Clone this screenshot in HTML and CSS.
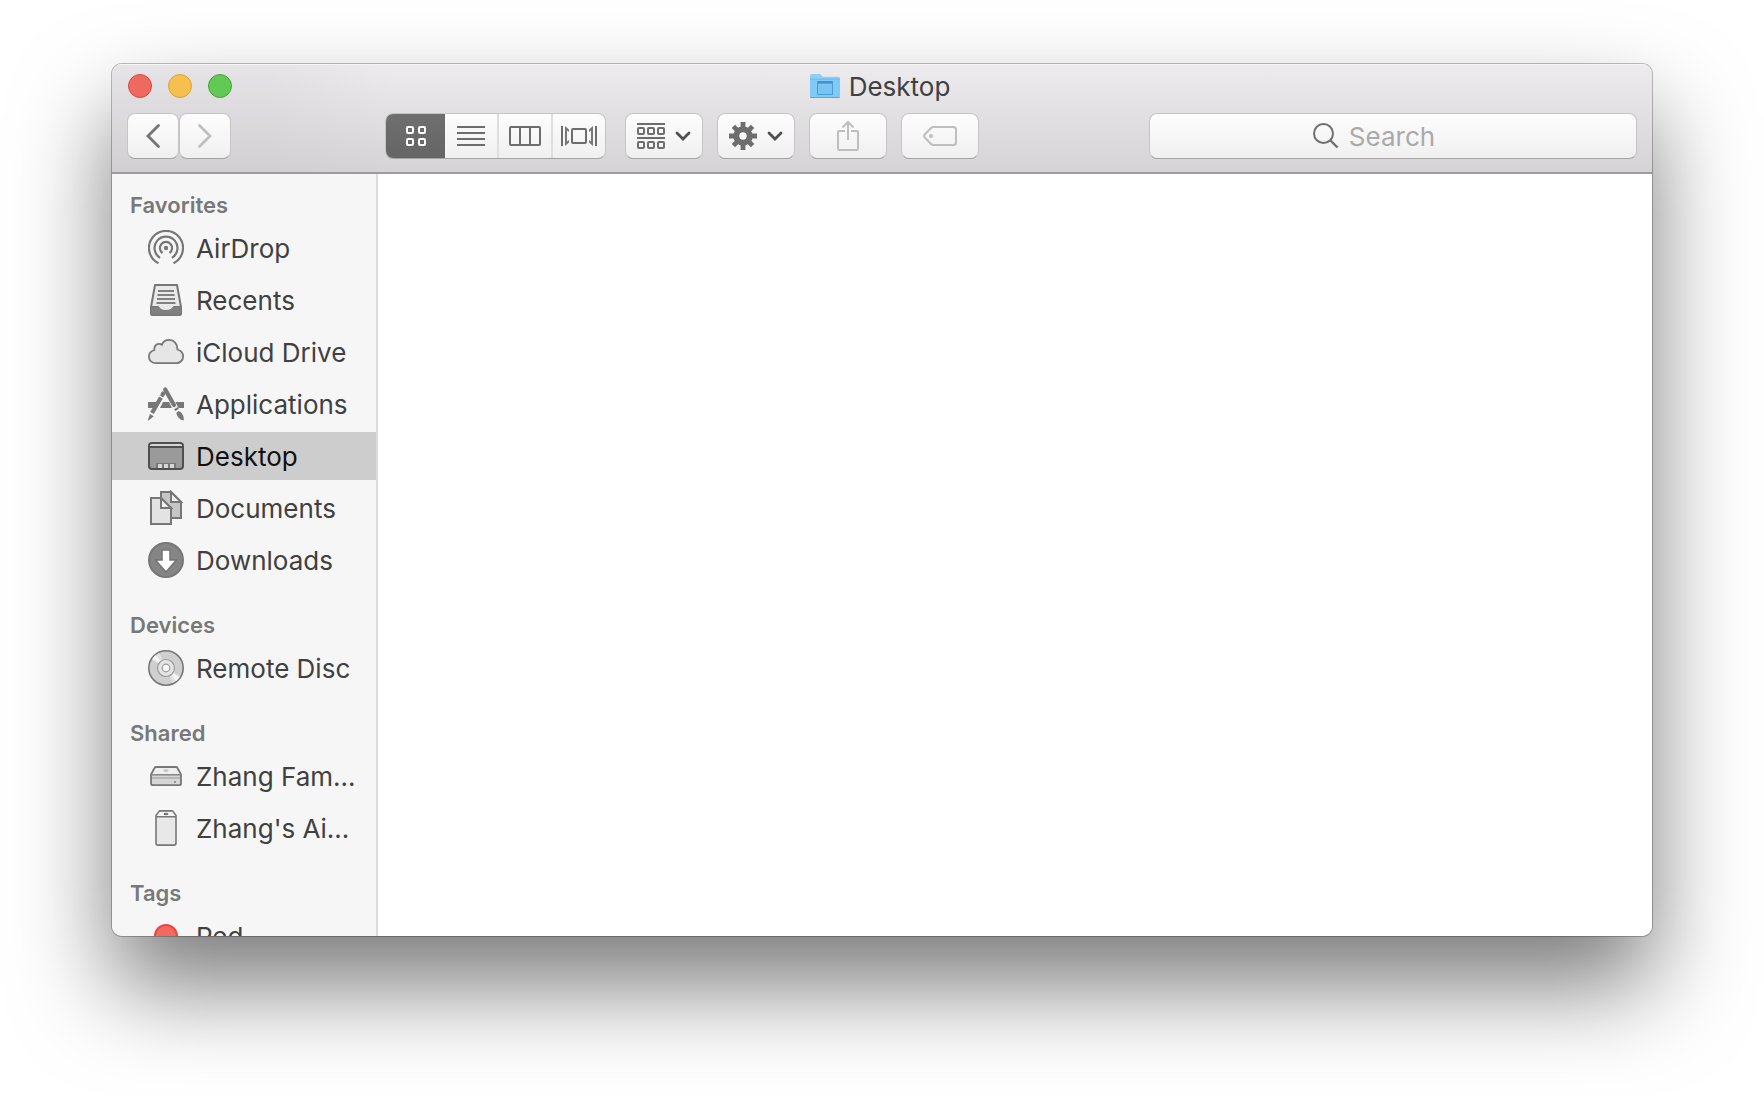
FILE: index.html
```html
<!DOCTYPE html>
<html lang="en">
<head>
    <meta charset="UTF-8">
    <meta name="viewport" content="width=device-width, initial-scale=1.0">
    <title>Desktop</title>
    <link rel="stylesheet" href="styles.css">
</head>
<body>
    <div class="window">
        <header class="toolbar">
            <div class="titlebar">
                <div class="window-controls">
                    <button type="button" class="light close" aria-label="Close"></button>
                    <button type="button" class="light minimize" aria-label="Minimize"></button>
                    <button type="button" class="light zoom" aria-label="Zoom"></button>
                </div>
                <h1 class="title">
                    <svg width="30" height="26" viewBox="0 0 30 26" aria-hidden="true">
                        <path d="M0 2.5Q0 1 1.500 1H9.500Q10.500 1 11.200 2L12.500 3.800H28.500Q30 3.800 30 5.300V23.500Q30 25 28.500 25H1.500Q0 25 0 23.500Z" fill="#8fd0f6"/>
                        <path d="M0 6H30V23.500Q30 25 28.500 25H1.500Q0 25 0 23.500Z" fill="#7fcaf6"/>
                        <path d="M0 6H30" stroke="#6bb8e8"/>
                        <path d="M0.500 24.500H29.500" stroke="#5ba4cf"/>
                        <rect x="7.500" y="8.500" width="15" height="13" fill="#79c4f1" stroke="#459ed6"/>
                        <path d="M8 9.500H22" stroke="#3b8fc8" stroke-width="2"/>
                    </svg>
                    Desktop
                </h1>
            </div>

            <div class="tools">
                <div class="nav-buttons">
                    <button type="button" class="btn btn-nav" aria-label="Back">
                        <svg width="16" height="26" viewBox="0 0 16 26"><path d="M13.500 2.500L3 13L13.500 23.500" fill="none" stroke="#737373" stroke-width="2.800" stroke-linecap="round"/></svg>
                    </button>
                    <button type="button" class="btn btn-nav" aria-label="Forward" disabled>
                        <svg width="16" height="26" viewBox="0 0 16 26"><path d="M2.500 2.500L13 13L2.500 23.500" fill="none" stroke="#c0c0c0" stroke-width="2.800" stroke-linecap="round"/></svg>
                    </button>
                </div>

                <div class="view-switch">
                    <button type="button" class="view active" aria-label="Icon view">
                        <svg width="20" height="20" viewBox="0 0 20 20" fill="none" stroke="#fff" stroke-width="2">
                            <rect x="1" y="1" width="6" height="6" rx="1"/>
                            <rect x="13" y="1" width="6" height="6" rx="1"/>
                            <rect x="1" y="13" width="6" height="6" rx="1"/>
                            <rect x="13" y="13" width="6" height="6" rx="1"/>
                        </svg>
                    </button>
                    <button type="button" class="view" aria-label="List view">
                        <svg width="28" height="20" viewBox="0 0 28 20"><path d="M0 1H28M0 7H28M0 13H28M0 19H28" stroke="#6d6d6d" stroke-width="2"/></svg>
                    </button>
                    <button type="button" class="view" aria-label="Column view">
                        <svg width="32" height="20" viewBox="0 0 32 20" fill="none" stroke="#6d6d6d" stroke-width="2">
                            <rect x="1" y="1" width="30" height="18" rx="1"/>
                            <path d="M11 1V19M21 1V19"/>
                        </svg>
                    </button>
                    <button type="button" class="view" aria-label="Gallery view">
                        <svg width="36" height="20" viewBox="0 0 36 20">
                            <g fill="none" stroke="#6d6d6d" stroke-width="2">
                                <path d="M1 0V20M35 0V20"/>
                                <rect x="11" y="3" width="14" height="14" rx="1"/>
                            </g>
                            <path d="M4 0L8 3.500V6L6 4.500V15.500L8 14V16.500L4 20ZM32 0L28 3.500V6L30 4.500V15.500L28 14V16.500L32 20Z" fill="#777"/>
                        </svg>
                    </button>
                </div>

                <div class="actions">
                    <button type="button" class="btn btn-tool" aria-label="Arrange">
                        <svg width="28" height="26" viewBox="0 0 28 26" fill="none" stroke="#6d6d6d" stroke-width="2">
                            <path d="M0 1H28M0 15H28"/>
                            <rect x="1" y="5" width="6" height="6" rx="1"/>
                            <rect x="11" y="5" width="6" height="6" rx="1"/>
                            <rect x="21" y="5" width="6" height="6" rx="1"/>
                            <rect x="1" y="19" width="6" height="6" rx="1"/>
                            <rect x="11" y="19" width="6" height="6" rx="1"/>
                            <rect x="21" y="19" width="6" height="6" rx="1"/>
                        </svg>
                        <svg width="16" height="10" viewBox="0 0 16 10"><path d="M2 2L8 8L14 2" fill="none" stroke="#4f4f4f" stroke-width="2.800" stroke-linecap="round"/></svg>
                    </button>
                    <button type="button" class="btn btn-tool" aria-label="Action">
                        <svg width="28" height="28" viewBox="-14 -14 28 28">
                            <g stroke="#6d6d6d" stroke-width="4.800">
                                <path d="M0 -14V-6M0 14V6M-14 0H-6M14 0H6"/>
                                <path d="M-9.600 -9.600L-5 -5M9.600 -9.600L5 -5M-9.600 9.600L-5 5M9.600 9.600L5 5"/>
                            </g>
                            <circle r="6.700" fill="none" stroke="#6d6d6d" stroke-width="6"/>
                        </svg>
                        <svg width="16" height="10" viewBox="0 0 16 10"><path d="M2 2L8 8L14 2" fill="none" stroke="#4f4f4f" stroke-width="2.800" stroke-linecap="round"/></svg>
                    </button>
                    <button type="button" class="btn btn-tool" aria-label="Share" disabled>
                        <svg width="22" height="34" viewBox="0 0 22 34" fill="none" stroke="#bebebe" stroke-width="2">
                            <path d="M8 12H2Q1 12 1 13V29Q1 31 2.500 31H19.500Q21 31 21 29V13Q21 12 20 12H14"/>
                            <path d="M11 21V3M5.500 8.500L11 3L16.500 8.500"/>
                        </svg>
                    </button>
                    <button type="button" class="btn btn-tool" aria-label="Edit tags" disabled>
                        <svg width="34" height="20" viewBox="0 0 34 20">
                            <path d="M10.500 1H30.500Q33 1 33 3.500V16.500Q33 19 30.500 19H10.500Q9 19 8 18L1.800 11.500Q0.500 10 1.800 8.500L8 2Q9 1 10.500 1Z" fill="none" stroke="#bebebe" stroke-width="2"/>
                            <circle cx="8" cy="10" r="2" fill="#bebebe"/>
                        </svg>
                    </button>
                </div>

                <label class="search">
                    <svg width="26" height="26" viewBox="0 0 26 26" aria-hidden="true">
                        <circle cx="10.500" cy="10.500" r="9.500" fill="none" stroke="#6f6f6f" stroke-width="2"/>
                        <path d="M17 17L24.500 24.500" stroke="#6f6f6f" stroke-width="2.400"/>
                    </svg>
                    <input type="search" placeholder="Search" aria-label="Search">
                </label>
            </div>
        </header>

        <div class="main">
            <nav class="sidebar">
                <section>
                    <h2>Favorites</h2>
                    <ul>
                        <li><a href="#airdrop">
                            <svg class="icon" viewBox="0 0 36 36">
                                <g fill="none" stroke="#777" stroke-width="2.200">
                                    <path d="M10.500 33.200A17 17 0 1 1 25.500 33.200"/>
                                    <path d="M12.100 27.900A11.500 11.500 0 1 1 23.900 27.900"/>
                                    <path d="M14.500 23A6.100 6.100 0 1 1 21.500 23"/>
                                </g>
                                <circle cx="18" cy="18" r="2.200" fill="#777"/>
                            </svg>
                            <span>AirDrop</span>
                        </a></li>
                        <li><a href="#recents">
                            <svg class="icon" viewBox="0 0 36 36">
                                <path d="M7 3H29L33 25V31.500Q33 33 31.500 33H4.500Q3 33 3 31.500V25Z" fill="#e9e9e9" stroke="#777" stroke-width="2" stroke-linejoin="round"/>
                                <path d="M3 24.500H10.500Q12 28.500 18 28.500T25.500 24.500H33V31.500Q33 33 31.500 33H4.500Q3 33 3 31.500Z" fill="#808080" stroke="#777"/>
                                <path d="M10 9H26M9.500 13H26.500M9 17H27M8.500 21H27.500" stroke="#808080" stroke-width="2"/>
                            </svg>
                            <span>Recents</span>
                        </a></li>
                        <li><a href="#icloud">
                            <svg class="icon" viewBox="0 0 36 36">
                                <path d="M8 29.200C4 29.200 0.900 26.500 0.900 22.500C0.900 19.500 3 17 6.300 16C5.800 12.500 8 9.800 11 9.800C12.200 9.800 13 10.200 13.800 10.800C15 8 18 5.900 21.200 5.900C26 5.900 29.600 9.800 29.500 15.500C33 16.500 35.100 19 35.100 22.400C35.100 26.300 32 29.200 28.200 29.200Z" fill="#e6e6e6" stroke="#777" stroke-width="1.800"/>
                            </svg>
                            <span>iCloud Drive</span>
                        </a></li>
                        <li><a href="#applications">
                            <svg class="icon" viewBox="0 0 36 36">
                                <path d="M0 16H8.500L5.500 22H0ZM15 16H21L24 22H12ZM27.500 16H36V22H30.500Z" fill="#777"/>
                                <g stroke="#777" stroke-width="4.200">
                                    <path d="M17.200 3.500L26 19" stroke-linecap="round"/>
                                    <path d="M27.400 21.300L29 24"/>
                                    <path d="M13.500 10.500L4 27"/>
                                    <path d="M15.200 7.500L14.500 8.800" stroke-linecap="round"/>
                                </g>
                                <path d="M2 28L5.800 30.200L0.500 34.500Q-0.300 34.500 0 33.500ZM28.200 27Q31 23.500 34 27.500Q36.500 31 35.500 34.500Q30 33.500 28.200 27Z" fill="#777"/>
                                <path d="M11.300 9.900L15.600 12.500M24.800 23.300L29.300 20.700" stroke="#f6f6f6" stroke-width="1.200"/>
                            </svg>
                            <span>Applications</span>
                        </a></li>
                        <li><a href="#desktop" class="selected" aria-current="page">
                            <svg class="icon" viewBox="0 0 36 36">
                                <rect x="1" y="5" width="34" height="26" rx="3" fill="#9a9a9a" stroke="#4f4f4f" stroke-width="2"/>
                                <path d="M2 8Q2 6 4 6H32Q34 6 34 8Z" fill="#d6d6d6"/>
                                <path d="M1 9H35" stroke="#4f4f4f" stroke-width="2"/>
                                <path d="M8 30V25H28V30Z" fill="#777"/>
                                <path d="M10 26H14V30H10ZM16 26H20V30H16ZM22 26H26V30H22Z" fill="#d6d6d6"/>
                            </svg>
                            <span>Desktop</span>
                        </a></li>
                        <li><a href="#documents">
                            <svg class="icon" viewBox="0 0 36 36">
                                <g stroke="#777" stroke-width="2">
                                    <path d="M13 2H23L33 12V28H13Z" fill="#c6c6c6"/>
                                    <path d="M23 2V12H33Z" fill="#f1f1f1"/>
                                    <path d="M3 8H13L23 18V34H3Z" fill="#e3e3e3"/>
                                    <path d="M13 8V18H23Z" fill="#f1f1f1"/>
                                </g>
                            </svg>
                            <span>Documents</span>
                        </a></li>
                        <li><a href="#downloads">
                            <svg class="icon" viewBox="0 0 36 36">
                                <circle cx="18" cy="18" r="17" fill="#858585" stroke="#777" stroke-width="2"/>
                                <path d="M14 8H22V18H28.500L18 30L7.500 18H14Z" fill="#fff" stroke="#747474" stroke-width="1.500"/>
                            </svg>
                            <span>Downloads</span>
                        </a></li>
                    </ul>
                </section>

                <section>
                    <h2>Devices</h2>
                    <ul>
                        <li><a href="#remote-disc">
                            <svg class="icon" viewBox="0 0 36 36">
                                <circle cx="18" cy="18" r="17.200" fill="#cfcfcf" stroke="#777" stroke-width="1.600"/>
                                <path d="M18 18L4 9.500A16.400 16.400 0 0 1 11.500 3ZM18 18L32 26.500A16.400 16.400 0 0 1 24.500 33Z" fill="#e0e0e0"/>
                                <path d="M18 18L4.500 8.700A16.400 16.400 0 0 1 8 5ZM18 18L31.500 27.300A16.400 16.400 0 0 1 28 31Z" fill="#f6f6f6"/>
                                <circle cx="18" cy="18" r="8.500" fill="#e4e4e4" stroke="#999" stroke-width="1.200"/>
                                <circle cx="18" cy="18" r="3.800" fill="#f6f6f6" stroke="#999" stroke-width="1.200"/>
                            </svg>
                            <span>Remote Disc</span>
                        </a></li>
                    </ul>
                </section>

                <section>
                    <h2>Shared</h2>
                    <ul>
                        <li><a href="#zhang-family">
                            <svg class="icon" viewBox="0 0 36 36">
                                <path d="M8 9H28Q29 9 29.500 10L33 16.500V25.500Q33 27.200 31 27.200H5Q3 27.200 3 25.500V16.500L6.500 10Q7 9 8 9Z" fill="#d6d6d6" stroke="#777" stroke-width="1.800"/>
                                <path d="M8 10H28L31.500 16H4.500Z" fill="#eee"/>
                                <path d="M3 16.800H33" stroke="#858585" stroke-width="1.500"/>
                                <path d="M4 20H32" stroke="#999"/>
                                <ellipse cx="18" cy="12.500" rx="2.500" ry="1.500" fill="#c6c6c6"/>
                                <circle cx="27" cy="24" r="1" fill="#808080"/>
                            </svg>
                            <span>Zhang Fam...</span>
                        </a></li>
                        <li><a href="#zhang-airport">
                            <svg class="icon" viewBox="0 0 36 36">
                                <path d="M11.500 0.900H24.500L28 5.500V33Q28 35.100 26 35.100H10Q8 35.100 8 33V5.500Z" fill="#e8e8e8" stroke="#777" stroke-width="1.600" stroke-linejoin="round"/>
                                <path d="M11.800 2H24.200L27 6H9Z" fill="#f4f4f4"/>
                                <path d="M8 6.800H28" stroke="#777" stroke-width="1.400"/>
                                <ellipse cx="18" cy="4" rx="2.500" ry="1.200" fill="#777"/>
                            </svg>
                            <span>Zhang's Ai...</span>
                        </a></li>
                    </ul>
                </section>

                <section>
                    <h2>Tags</h2>
                    <ul>
                        <li><a href="#red">
                            <svg class="icon" viewBox="0 0 36 36"><circle cx="18" cy="18" r="11" fill="#f2695f" stroke="#e9483c" stroke-width="2"/></svg>
                            <span>Red</span>
                        </a></li>
                    </ul>
                </section>
            </nav>
            <main class="content"></main>
        </div>
    </div>
</body>
</html>
```
FILE: styles.css
```css
* {
    box-sizing: border-box;
}

body {
    display: flex;
    height: 100vh;
    margin: 0;
    padding: 64px 112px 160px;
    background: #fff;
    color: #404040;
    font-family: Inter, Roboto, sans-serif;
    font-size: 26px;
}

button,
input {
    padding: 0;
    border: none;
    font: inherit;
}

svg {
    display: block;
    flex: none;
}

.window {
    display: flex;
    flex: 1;
    flex-direction: column;
    min-width: 0;
    overflow: hidden;
    border-radius: 10px;
    background: #fff;
    box-shadow: 0 0 0 1px rgba(0, 0, 0, 0.25), 0 50px 96px rgba(0, 0, 0, 0.52);
}

/* Toolbar */
.toolbar {
    flex: none;
    padding-bottom: 13px;
    border-bottom: 2px solid #9d9b9d;
    background: linear-gradient(90deg, rgba(190, 187, 193, 0.15) 160px, transparent 280px),
        linear-gradient(#edebee, #d5d3d6);
    box-shadow: inset 0 1px #f7f6f7;
}

.titlebar {
    display: grid;
    grid-template-columns: 1fr auto 1fr;
    align-items: center;
    height: 44px;
    padding: 0 20px 0 16px;
}

.window-controls {
    display: flex;
    gap: 16px;
}

.light {
    width: 24px;
    height: 24px;
    border: 1px solid;
    border-radius: 50%;
}

.close {
    border-color: #d9493f;
    background: #ee6a5f;
}

.minimize {
    border-color: #dca03a;
    background: #f6c04f;
}

.zoom {
    border-color: #4ba53b;
    background: #62c955;
}

.title {
    display: flex;
    align-items: center;
    gap: 9px;
    margin: 0;
    font-size: 26px;
    font-weight: 400;
}

.tools {
    display: flex;
    align-items: center;
    margin-top: 5px;
    padding: 0 15px;
}

.nav-buttons {
    display: flex;
}

.btn,
.view-switch,
.search {
    height: 46px;
    border: 1px solid #c6c4c6;
    border-bottom-color: #a5a3a5;
    border-radius: 8px;
    background: linear-gradient(#fdfdfd, #f0f0f0);
}

.btn {
    display: flex;
    align-items: center;
    justify-content: center;
}

.btn-nav {
    width: 52px;
}

.btn-tool {
    gap: 10px;
    width: 78px;
}

.view-switch {
    display: flex;
    margin-left: 154px;
    overflow: hidden;
}

.view {
    display: flex;
    align-items: center;
    justify-content: center;
    width: 54px;
    border-left: 2px solid #dedede;
    background: none;
}

.view.active {
    width: 59px;
    border-left: none;
    background: linear-gradient(#6f6f6f, #656565);
}

.active + .view {
    width: 52px;
    border-left: none;
}

.actions {
    display: flex;
    gap: 14px;
    margin-left: 19px;
}

.search {
    display: flex;
    flex: 0 1 488px;
    align-items: center;
    justify-content: center;
    gap: 10px;
    margin-left: auto;
    padding-right: 38px;
}

.search input {
    min-width: 0;
    outline: none;
    background: none;
    color: #404040;
    appearance: none;
    field-sizing: content;
}

.search input::placeholder {
    color: #aaa;
}

/* Sidebar */
.main {
    display: flex;
    flex: 1;
    min-height: 0;
}

.sidebar {
    flex: none;
    width: 266px;
    padding-top: 10px;
    overflow: hidden;
    border-right: 2px solid #dcdcdc;
    background: #f6f6f6;
}

.sidebar section {
    margin-bottom: 20px;
}

.sidebar h2 {
    height: 40px;
    margin: 0;
    padding-left: 18px;
    color: #787878;
    font-size: 22px;
    font-weight: 600;
    line-height: 42px;
}

.sidebar ul {
    display: grid;
    gap: 4px;
    margin: 0;
    padding: 0;
    list-style: none;
}

.sidebar a {
    display: flex;
    align-items: center;
    gap: 12px;
    height: 48px;
    padding-left: 36px;
    color: #404040;
    line-height: 32px;
    text-decoration: none;
    white-space: nowrap;
}

.sidebar span {
    padding-top: 2px;
}

.sidebar .selected {
    background: #cdcdcd;
    color: #111;
}

.icon {
    width: 36px;
    height: 36px;
}

.content {
    flex: 1;
    background: #fff;
}
```
